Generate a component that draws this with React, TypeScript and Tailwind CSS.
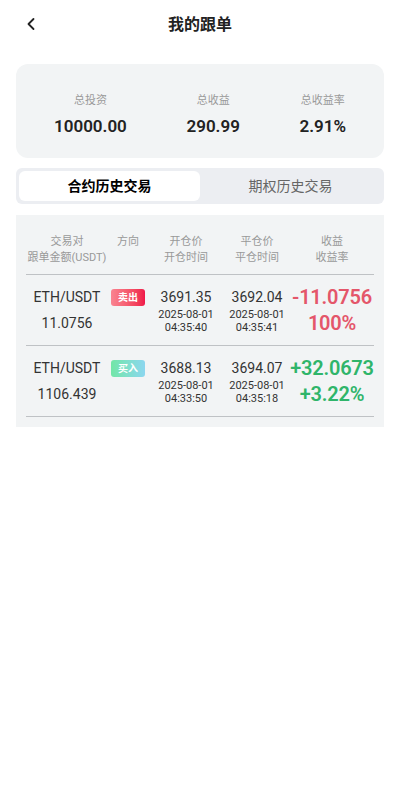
import { ChevronLeft } from "lucide-react";

const trades = [
  {
    pair: "ETH/USDT",
    amount: "11.0756",
    side: "sell",
    openPrice: "3691.35",
    openDate: "2025-08-01",
    openTime: "04:35:40",
    closePrice: "3692.04",
    closeDate: "2025-08-01",
    closeTime: "04:35:41",
    profit: "-11.0756",
    rate: "100%",
  },
  {
    pair: "ETH/USDT",
    amount: "1106.439",
    side: "buy",
    openPrice: "3688.13",
    openDate: "2025-08-01",
    openTime: "04:33:50",
    closePrice: "3694.07",
    closeDate: "2025-08-01",
    closeTime: "04:35:18",
    profit: "+32.0673",
    rate: "+3.22%",
  },
];

const font = { fontFamily: "Roboto, 'Noto Sans CJK SC', sans-serif" };

export default function App() {
  return (
    <div className="w-[400px] min-h-[800px] bg-white" style={font}>
      {/* header */}
      <div className="relative h-[50px] flex items-center justify-center">
        <ChevronLeft className="absolute left-[21px] top-[14px] w-[20px] h-[20px] text-[#222]" strokeWidth={2.2} />
        <h1 className="text-[16px] font-bold text-[#222] -mt-[1px]">我的跟单</h1>
      </div>

      {/* summary */}
      <div className="mx-4 mt-[14px] h-[94px] rounded-[12px] bg-[#f2f4f5] flex items-center justify-between px-[38px] pt-[8px]">
        {[
          ["总投资", "10000.00"],
          ["总收益", "290.99"],
          ["总收益率", "2.91%"],
        ].map(([label, value]) => (
          <div key={label} className="flex flex-col items-center">
            <span className="text-[11px] text-[#9a9a9a] leading-[14px]">{label}</span>
            <span className="mt-[8px] text-[17px] font-semibold text-[#222] leading-[20px]">{value}</span>
          </div>
        ))}
      </div>

      {/* tabs */}
      <div className="mx-4 mt-[10px] h-[36px] rounded-[6px] bg-[#eceef2] p-[3px] flex">
        <div className="flex-1 rounded-[6px] bg-white flex items-center justify-center text-[14px] font-bold text-black">
          合约历史交易
        </div>
        <div className="flex-1 flex items-center justify-center text-[14px] text-[#666]">
          期权历史交易
        </div>
      </div>

      {/* table */}
      <div className="mx-4 mt-[11px] bg-[#f2f4f5] px-[10px] pt-[19px] pb-[10px]">
        <div className="flex text-[11px] text-[#999] leading-[16px] text-center pb-[8px] border-b border-[#bfc2c5]">
          <div className="w-[82px]">交易对<br />跟单金额(USDT)</div>
          <div className="w-[40px]">方向</div>
          <div className="w-[76px]">开仓价<br />开仓时间</div>
          <div className="w-[66px]">平仓价<br />平仓时间</div>
          <div className="flex-1">收益<br />收益率</div>
        </div>
        {trades.map((t, i) => {
          const sell = t.side === "sell";
          const color = sell ? "text-[#e4566a]" : "text-[#2fb56a]";
          return (
            <div key={i} className="flex items-start text-center h-[71px] pt-[12px] border-b border-[#bfc2c5]">
              <div className="w-[82px] text-[14px] text-[#333]">
                <div className="leading-[20px]">{t.pair}</div>
                <div className="leading-[20px] mt-[6px]">{t.amount}</div>
              </div>
              <div className="w-[40px] flex justify-center pt-[2px]">
                <span
                  className={
                    "w-[34px] h-[17px] rounded-[3px] text-[10px] font-bold text-white flex items-center justify-center " +
                    (sell
                      ? "bg-gradient-to-r from-[#f98391] to-[#ef1549]"
                      : "bg-gradient-to-r from-[#72e6a6] to-[#8cd6ef]")
                  }
                >
                  {sell ? "卖出" : "买入"}
                </span>
              </div>
              <div className="w-[76px] text-[#333]">
                <div className="text-[14px] leading-[20px]">{t.openPrice}</div>
                <div className="text-[11px] leading-[13px] mt-[1px]">{t.openDate}</div>
                <div className="text-[11px] leading-[13px]">{t.openTime}</div>
              </div>
              <div className="w-[66px] text-[#333]">
                <div className="text-[14px] leading-[20px]">{t.closePrice}</div>
                <div className="text-[11px] leading-[13px] mt-[1px]">{t.closeDate}</div>
                <div className="text-[11px] leading-[13px]">{t.closeTime}</div>
              </div>
              <div className={"flex-1 text-[20px] font-semibold tracking-[-0.2px] " + color}>
                <div className="leading-[22px] -mt-[1px]">{t.profit}</div>
                <div className="leading-[22px] mt-[4px]">{t.rate}</div>
              </div>
            </div>
          );
        })}
      </div>
    </div>
  );
}
